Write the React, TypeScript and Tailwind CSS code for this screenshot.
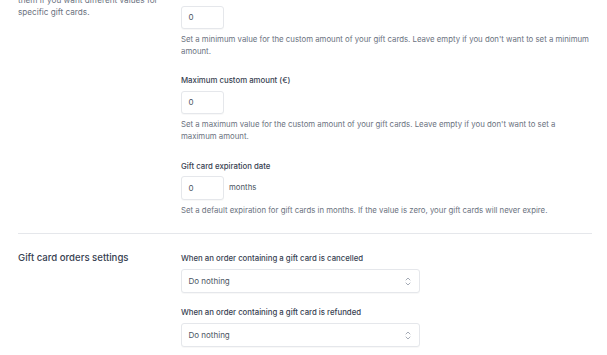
import React from "react";

function Chevrons() {
  return (
    <svg width="6" height="9" viewBox="0 0 6 9" fill="none" stroke="#9ca3af" strokeWidth="0.9" strokeLinecap="round" strokeLinejoin="round">
      <path d="M1 3 L3 1 L5 3" />
      <path d="M1 6 L3 8 L5 6" />
    </svg>
  );
}

function Label({ children }: { children: React.ReactNode }) {
  return <div className="text-[7.8px] leading-[12px] font-medium text-[#374151]">{children}</div>;
}

function Help({ children }: { children: React.ReactNode }) {
  return <p className="mt-[5px] text-[7.8px] leading-[11.6px] text-[#6b7280] max-w-[410px]">{children}</p>;
}

function NumInput() {
  return (
    <div className="w-[43px] h-[23.5px] rounded-[3px] border border-[#e5e7eb] bg-white shadow-[0_1px_1px_rgba(0,0,0,0.03)] flex items-center pl-[6.5px] text-[8px] text-[#4b5563]">
      0
    </div>
  );
}

function Select({ value }: { value: string }) {
  return (
    <div className="mt-[5px] w-[239px] h-[23.5px] rounded-[3px] border border-[#e5e7eb] bg-white shadow-[0_1px_1px_rgba(0,0,0,0.03)] flex items-center justify-between pl-[6.5px] pr-[8px] text-[8px] text-[#4b5563]">
      <span>{value}</span>
      <Chevrons />
    </div>
  );
}

export default function App() {
  return (
    <div className="w-full h-[355px] overflow-hidden bg-white" style={{ fontFamily: "Inter, 'Noto Sans', sans-serif" }}>
      <div className="pl-[18px] pr-[15px] -mt-[37px]">
        <div className="flex border-b border-[#e5e7eb] pb-[17px]">
          <div className="w-[163px] shrink-0 pr-[10px]">
            <div className="text-[9.6px] leading-[14px] font-medium text-[#374151]">Custom amount</div>
            <p className="mt-[6px] text-[8.2px] leading-[11.8px] text-[#6b7280] whitespace-nowrap">
              Default values. You can override
              <br />
              them if you want different values for
              <br />
              specific gift cards.
            </p>
          </div>
          <div className="flex-1 pt-[26px]">
            <Label>Minimum custom amount (€)</Label>
            <div className="mt-[4.5px]"><NumInput /></div>
            <Help>
              Set a minimum value for the custom amount of your gift cards. Leave empty if you don't want to set a minimum amount.
            </Help>
            <div className="mt-[17px]"><Label>Maximum custom amount (€)</Label></div>
            <div className="mt-[4.5px]"><NumInput /></div>
            <Help>
              Set a maximum value for the custom amount of your gift cards. Leave empty if you don't want to set a maximum amount.
            </Help>
            <div className="mt-[17.5px]"><Label>Gift card expiration date</Label></div>
            <div className="mt-[4.5px] flex items-center">
              <NumInput />
              <span className="ml-[5px] text-[7.8px] text-[#4b5563]">months</span>
            </div>
            <Help>
              Set a default expiration for gift cards in months. If the value is zero, your gift cards will never expire.
            </Help>
          </div>
        </div>
        <div className="flex pt-[18px]">
          <div className="w-[163px] shrink-0">
            <div className="text-[9.6px] leading-[12px] font-medium text-[#374151]">Gift card orders settings</div>
          </div>
          <div className="flex-1">
            <Label>When an order containing a gift card is cancelled</Label>
            <Select value="Do nothing" />
            <div className="mt-[13.5px]"><Label>When an order containing a gift card is refunded</Label></div>
            <Select value="Do nothing" />
          </div>
        </div>
      </div>
    </div>
  );
}
